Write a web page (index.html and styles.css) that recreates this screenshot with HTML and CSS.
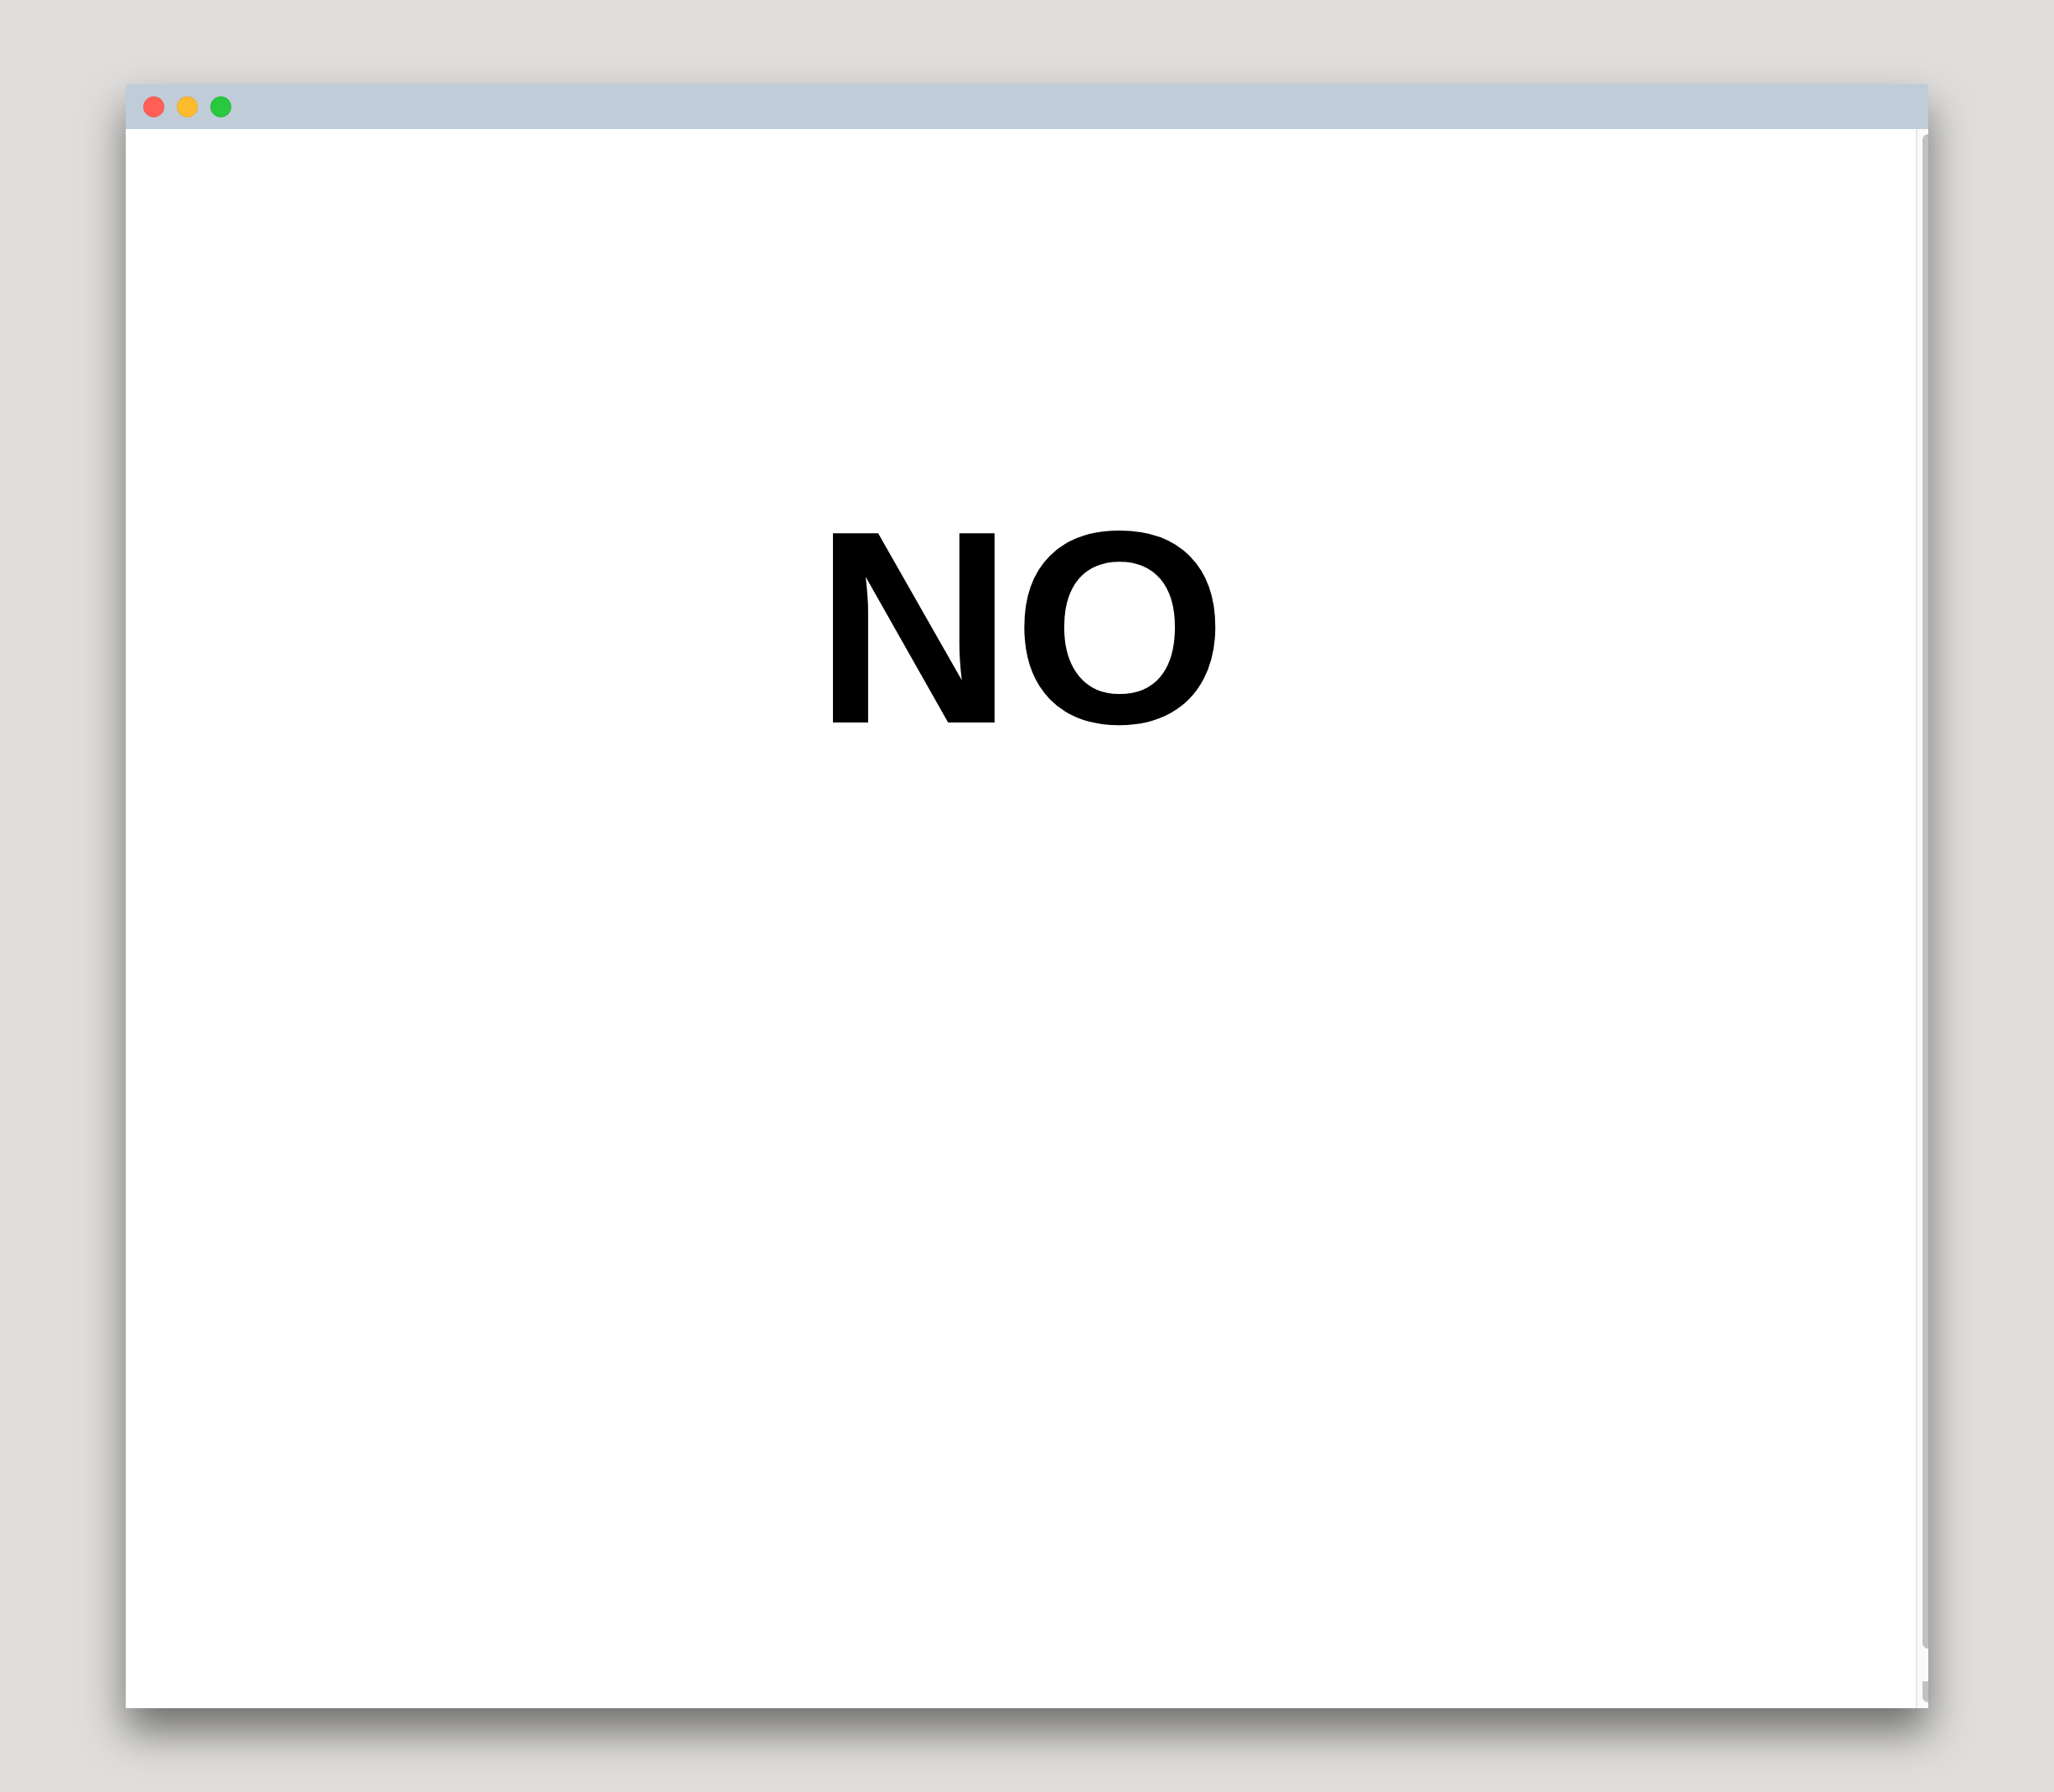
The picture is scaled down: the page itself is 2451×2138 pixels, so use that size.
FILE: index.html
```html
<!DOCTYPE html>
<html lang="en">
<head>
  <meta charset="UTF-8">
  <meta name="viewport" content="width=device-width, initial-scale=1.0">
  <title>NO</title>
  <link rel="stylesheet" href="styles.css">
</head>
<body>
  <div class="window">
    <div class="titlebar">
      <span class="dot red"></span>
      <span class="dot yellow"></span>
      <span class="dot green"></span>
    </div>
    <div class="content">
      <div class="page">
        <h1>NO</h1>
      </div>
      <div class="scrollbar">
        <div class="thumb"></div>
        <div class="thumb-end"></div>
      </div>
    </div>
  </div>
</body>
</html>
```

FILE: styles.css
```css
body {
  margin: 0;
  padding: 100px 150px;
  background: #dfdedc;
  font-family: "Liberation Sans", Arial, sans-serif;
}

.window {
  height: 1938px;
  display: flex;
  flex-direction: column;
  box-shadow: 0 28px 50px rgba(0, 0, 0, 0.5);
  border-radius: 4px 4px 0 0;
}

.titlebar {
  height: 54px;
  background: #c0cdd8;
  border-radius: 4px 4px 0 0;
  display: flex;
  align-items: center;
  gap: 15px;
  padding-left: 21px;
}

.dot {
  width: 25px;
  height: 25px;
  border-radius: 50%;
  box-sizing: border-box;
  border: 1px solid rgba(0, 0, 0, 0.08);
}

.red {
  background: #ff5f57;
}

.yellow {
  background: #febb2e;
}

.green {
  background: #28c840;
}

.content {
  flex: 1;
  display: flex;
  background: #fff;
}

.page {
  flex: 1;
  text-align: center;
  padding-top: 406px;
}

h1 {
  margin: 0;
  font-size: 328px;
  font-weight: bold;
  color: #000;
}

.scrollbar {
  width: 15px;
  box-sizing: border-box;
  border-left: 2px solid #e8e8e8;
  background: #fafafa;
  padding: 6px 0 7px 6px;
  display: flex;
  flex-direction: column;
}

.thumb {
  height: 1807px;
  background: #c1c1c1;
  border-radius: 7px 0 0 7px;
}

.thumb-end {
  margin-top: 39px;
  height: 25px;
  background: #c1c1c1;
  border-radius: 0 0 0 7px;
}
```
